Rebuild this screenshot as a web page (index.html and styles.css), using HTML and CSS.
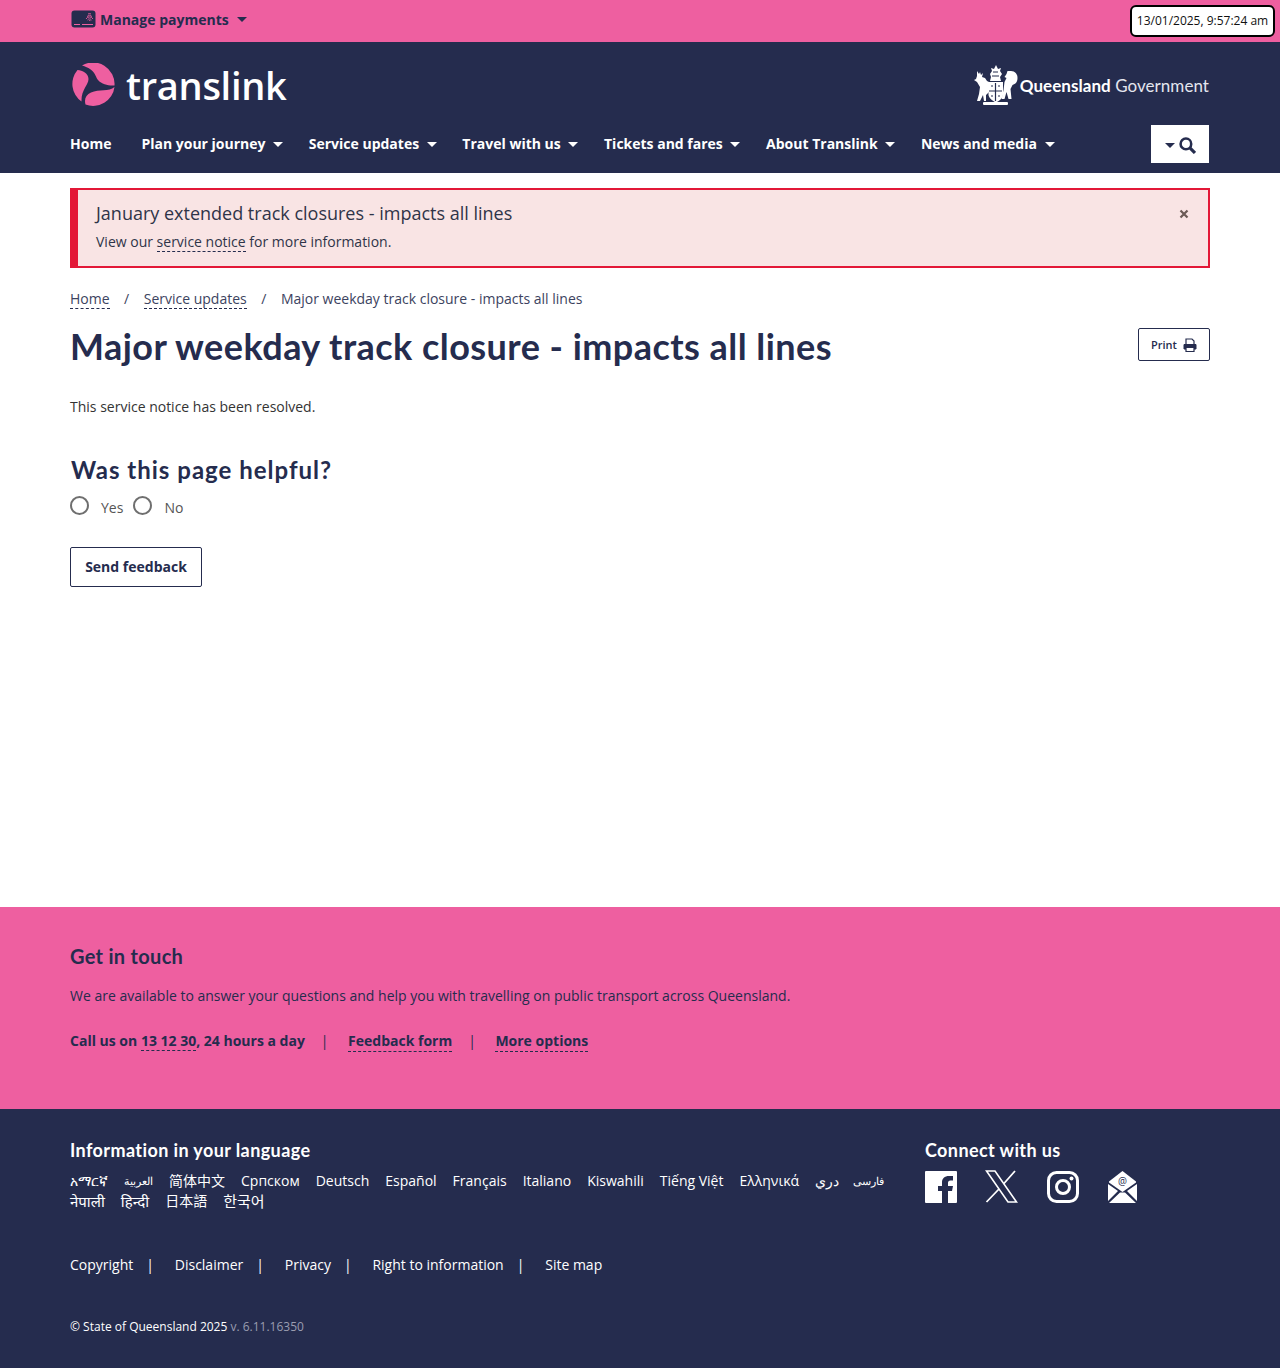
FILE: index.html
```html
<!DOCTYPE html>
<html lang="en">
<head>
    <meta charset="UTF-8">
    <meta name="viewport" content="width=device-width, initial-scale=1.0">
    <title>Major weekday track closure - impacts all lines</title>
    <link rel="stylesheet" href="styles.css">
</head>
<body>
    <div class="clock">13/01/2025, 9:57:24 am</div>

    <div class="topbar">
        <a class="manage" href="#">
            <svg class="card-icon" width="25" height="18" viewBox="0 0 25 18">
                <rect x="0.5" y="0.5" width="24" height="17" rx="3" fill="#252c4e"/>
                <path d="M3 14.500h6M11 14.500h11" stroke="#ee5fa0" stroke-width="1"/>
                <path d="M15 9a4 4 0 0 1 7 0M16.500 10a2.400 2.400 0 0 1 4 0M18 11a.8.8 0 0 1 1.500 0M17 4a3 3 0 0 1 3 0M16 6.500a3.500 3.500 0 0 1 5 0" fill="none" stroke="#ee5fa0" stroke-width="0.9"/>
            </svg>
            Manage payments
            <span class="caret"></span>
        </a>
    </div>

    <header class="header">
        <div class="brand-row">
            <a class="logo" href="#">
                <svg width="44" height="44" viewBox="0 0 44 44">
                    <g fill="#ee5fa0">
                        <path d="M11 2.500A21.500 21.500 0 0 1 43.500 22.500C38 23 31 21.500 27 17C24 13.500 25 6.500 11 2.500Z"/>
                        <path d="M6.500 7C11.500 7 17.500 10.500 17.500 16C17.500 22 10 27 10.500 38.500A21.500 21.500 0 0 1 6.500 7Z"/>
                        <path d="M43.500 24C38 29 28 26 20 29.500C15 31.500 13 36 14.500 41.500A21.500 21.500 0 0 0 43.500 24Z"/>
                    </g>
                </svg>
                <span class="logo-text">translink</span>
            </a>
            <a class="qg" href="#">
                <svg width="44" height="42" viewBox="0 0 44 42">
                    <g fill="#fff">
                        <path d="M14.500 18h14.500v13c-1 4-4 6-7 7.500-3-1.500-6.500-3.500-7.500-7.500Z"/>
                        <path d="M3 7l2 3 1-2 1 3 2-2-1 4 3 1 2 3 2 1v10l-3 3v6H10l-1-6-3 6H3l2-7 1-7-3-5-3-2 2-1 1-3Z"/>
                        <path d="M37 7c4 0 6.500 3 6.500 7 0 4-2 6-5 7l-2 4 1 10h-3l-2-7-2 7h-3l2-9 1-8 2-4-2-1 2-3 1-3Z"/>
                        <path d="M16 10l2-3-1-3 3 1 2-4 2 4 3-1-1 3 2 3-2 3 1 4H16l1-4Z"/>
                        <rect x="9" y="38" width="25" height="3" rx="1"/>
                    </g>
                    <path d="M21.500 19v18M15 27h13M17 22h2M24 22h2M17 32h2M24 32h2M19 8h5M18 12h7" stroke="#252c4e" stroke-width="1.200"/>
                </svg>
                <span class="qg-text"><b>Queensland</b> Government</span>
            </a>
        </div>
        <nav class="nav">
            <a class="nav-home" href="#">Home</a>
            <a href="#">Plan your journey <span class="caret"></span></a>
            <a href="#">Service updates <span class="caret"></span></a>
            <a href="#">Travel with us <span class="caret"></span></a>
            <a href="#">Tickets and fares <span class="caret"></span></a>
            <a href="#">About Translink <span class="caret"></span></a>
            <a href="#">News and media <span class="caret"></span></a>
            <button class="search-btn" aria-label="Search">
                <span class="caret"></span>
                <svg width="17" height="17" viewBox="0 0 16 16">
                    <circle cx="6.500" cy="6.500" r="5" fill="none" stroke="#252c4e" stroke-width="2.400"/>
                    <path d="M10.500 10.500L15 15" stroke="#252c4e" stroke-width="3"/>
                </svg>
            </button>
        </nav>
    </header>

    <main class="main">
        <div class="alert">
            <div>
                <h2 class="alert-title">January extended track closures - impacts all lines</h2>
                <p class="alert-text">View our <a href="#">service notice</a> for more information.</p>
            </div>
            <svg class="alert-close" width="10" height="10" viewBox="0 0 10 10">
                <path d="M1.500 1.500l7 7M8.500 1.500l-7 7" stroke="#6b5a55" stroke-width="2.200"/>
            </svg>
        </div>

        <ol class="breadcrumbs">
            <li><a href="#">Home</a></li>
            <li class="sep">/</li>
            <li><a href="#">Service updates</a></li>
            <li class="sep">/</li>
            <li>Major weekday track closure - impacts all lines</li>
        </ol>

        <div class="title-row">
            <h1>Major weekday track closure - impacts all lines</h1>
            <button class="print-btn">
                Print
                <svg width="14" height="14" viewBox="0 0 14 14">
                    <path d="M3 6V1h6l2 2v3" fill="none" stroke="#252c4e" stroke-width="1.200"/>
                    <path d="M1 6.500h12v4.500h-12Z" fill="#252c4e" stroke="#252c4e"/>
                    <path d="M3 9.500h8v4h-8Z" fill="#fff" stroke="#252c4e" stroke-width="1.200"/>
                </svg>
            </button>
        </div>

        <p class="resolved">This service notice has been resolved.</p>

        <h2 class="helpful">Was this page helpful?</h2>
        <div class="radios">
            <label><input type="radio" name="helpful"> Yes</label>
            <label><input type="radio" name="helpful"> No</label>
        </div>
        <button class="feedback-btn">Send feedback</button>
    </main>

    <section class="touch">
        <h2>Get in touch</h2>
        <p>We are available to answer your questions and help you with travelling on public transport across Queensland.</p>
        <div class="touch-links">
            <span>Call us on <a href="#">13 12 30</a>, 24 hours a day</span>
            <span class="bar">|</span>
            <a href="#">Feedback form</a>
            <span class="bar">|</span>
            <a href="#">More options</a>
        </div>
    </section>

    <footer class="footer">
        <div class="footer-top">
            <div class="languages">
                <h2>Information in your language</h2>
                <ul class="lang-list">
                    <li>አማርኛ</li>
                    <li class="rtl">العربية</li>
                    <li>简体中文</li>
                    <li>Српском</li>
                    <li>Deutsch</li>
                    <li>Español</li>
                    <li>Français</li>
                    <li>Italiano</li>
                    <li>Kiswahili</li>
                    <li>Tiếng Việt</li>
                    <li>Ελληνικά</li>
                    <li class="dari">دري</li>
                    <li class="rtl">فارسی</li>
                    <li class="row-break"></li>
                    <li class="wide">नेपाली</li>
                    <li class="wide">हिन्दी</li>
                    <li>日本語</li>
                    <li class="wide">한국어</li>
                </ul>
            </div>
            <div class="connect">
                <h2>Connect with us</h2>
                <div class="social">
                    <svg class="fb" width="32" height="32" viewBox="0 0 32 32">
                        <path d="M1 0h30a1 1 0 0 1 1 1v30a1 1 0 0 1-1 1h-8V20h4l1-5h-5v-3c0-1.500.7-2.500 2.500-2.500H28V5h-4c-4.500 0-7 2.500-7 6.500V15h-4v5h4v12H1a1 1 0 0 1-1-1V1a1 1 0 0 1 1-1Z" fill="#fff"/>
                    </svg>
                    <svg width="33" height="33" viewBox="0 0 33 33">
                        <path d="M1.500 1h8.500l21.500 31H23Z" fill="none" stroke="#fff" stroke-width="1.600"/>
                        <path d="M30 1L18.500 14M14 19L1.500 32" stroke="#fff" stroke-width="1.800"/>
                    </svg>
                    <svg width="32" height="32" viewBox="0 0 32 32">
                        <rect x="1.500" y="1.500" width="29" height="29" rx="8" fill="none" stroke="#fff" stroke-width="3"/>
                        <circle cx="16" cy="16" r="6.500" fill="none" stroke="#fff" stroke-width="3"/>
                        <circle cx="24.500" cy="7.500" r="2" fill="#fff"/>
                    </svg>
                    <svg width="29" height="32" viewBox="0 0 29 32">
                        <path d="M14.500 0L28 10.500v1L14.500 21 1 11.500v-1Z" fill="#fff"/>
                        <path d="M0 13l10 7L0 30ZM29 13l-10 7 10 10ZM1 32l11-10.500h5L28 32Z" fill="#fff"/>
                        <text x="14.500" y="14" text-anchor="middle" class="at">@</text>
                    </svg>
                </div>
            </div>
        </div>
        <ul class="footer-links">
            <li><a href="#">Copyright</a></li>
            <li><a href="#">Disclaimer</a></li>
            <li><a href="#">Privacy</a></li>
            <li><a href="#">Right to information</a></li>
            <li><a href="#">Site map</a></li>
        </ul>
        <p class="copyright">© State of Queensland 2025 <span>v. 6.11.16350</span></p>
    </footer>
</body>
</html>
```

FILE: styles.css
```css
* {
    box-sizing: border-box;
}
body {
    margin: 0;
    font-family: 'Open Sans', 'Noto Sans', 'Noto Sans CJK SC', sans-serif;
    font-size: 14px;
    color: #252c4e;
    background: #fff;
    position: relative;
}
a {
    color: inherit;
    text-decoration: none;
}
h1, h2, p, ul, ol {
    margin: 0;
    padding: 0;
}
ul, ol {
    list-style: none;
}
.caret {
    display: inline-block;
    width: 0;
    height: 0;
    margin-left: 4px;
    vertical-align: 2px;
    border-top: 5px solid currentColor;
    border-left: 5px solid transparent;
    border-right: 5px solid transparent;
}

/* top strip */
.clock {
    position: absolute;
    top: 5px;
    left: 1130px;
    width: 145px;
    height: 32px;
    border: 2px solid #000;
    border-radius: 6px;
    background: #fff;
    color: #111;
    font-size: 12px;
    line-height: 28px;
    text-align: center;
}
.topbar {
    height: 42px;
    padding: 0 70px;
    display: flex;
    align-items: center;
    background: #ee5fa0;
}
.manage {
    display: flex;
    align-items: center;
    gap: 4px;
    padding-left: 1px;
    padding-bottom: 4px;
    font-weight: 700;
    font-size: 14px;
}
.manage .caret {
    margin-left: 4px;
}

/* header */
.header {
    height: 131px;
    padding: 21px 70px 0;
    background: #252c4e;
    color: #fff;
}
.brand-row {
    display: flex;
    justify-content: space-between;
    align-items: center;
    height: 44px;
}
.logo {
    display: flex;
    align-items: center;
    gap: 11px;
    padding-left: 1px;
}
.logo-text {
    font-size: 38px;
    font-weight: 600;
    letter-spacing: -0.3px;
    line-height: 44px;
}
.qg {
    display: flex;
    align-items: center;
    gap: 2px;
    padding-right: 1px;
}
.qg-text {
    font-family: 'Lato', sans-serif;
    font-size: 17px;
    letter-spacing: 0.05px;
    color: #e4e6ee;
}
.qg-text b {
    color: #fff;
    font-weight: 700;
}
.nav {
    display: flex;
    align-items: center;
    gap: 25.6px;
    margin-top: 18px;
    height: 38px;
    font-weight: 700;
    font-size: 14px;
}
.nav a {
    padding-bottom: 2px;
}
.nav-home {
    margin-right: 4.4px;
}
.search-btn {
    margin-left: auto;
    margin-right: 1px;
    width: 58px;
    height: 38px;
    border: 0;
    background: #fff;
    color: #252c4e;
    display: flex;
    align-items: center;
    justify-content: center;
    gap: 4px;
    padding: 3px 0 0;
}
.search-btn .caret {
    margin: 0;
}

/* main content */
.main {
    min-height: 734px;
    padding: 15px 70px 0;
}
.alert {
    height: 80px;
    display: flex;
    justify-content: space-between;
    align-items: flex-start;
    padding: 10px 19px 0 18px;
    background: #f9e4e4;
    border: 2px solid #e31837;
    border-left-width: 8px;
    color: #2f3448;
}
.alert-title {
    font-size: 18px;
    font-weight: 400;
    line-height: 26px;
}
.alert-text {
    margin-top: 6px;
    line-height: 20px;
}
.alert-text a,
.breadcrumbs a {
    border-bottom: 1px dashed #252c4e;
}
.alert-close {
    margin-top: 9px;
}
.breadcrumbs {
    display: flex;
    gap: 14.5px;
    margin-top: 21px;
    line-height: 20px;
    color: #3c4360;
}
.title-row {
    display: flex;
    justify-content: space-between;
    align-items: flex-start;
    margin-top: 12px;
    height: 48px;
}
h1 {
    font-family: 'Lato', sans-serif;
    font-size: 36px;
    font-weight: 700;
    letter-spacing: 0.45px;
    line-height: 50px;
}
.print-btn {
    margin-top: 7px;
    width: 72px;
    height: 33px;
    display: flex;
    align-items: center;
    justify-content: center;
    gap: 6px;
    border: 1px solid #252c4e;
    border-radius: 2px;
    background: #fff;
    color: #252c4e;
    font-family: inherit;
    font-size: 11px;
    font-weight: 600;
}
.resolved {
    margin-top: 28px;
    line-height: 20px;
    color: #333;
}
.helpful {
    margin-top: 36px;
    padding-left: 1px;
    font-family: 'Lato', sans-serif;
    font-size: 24px;
    font-weight: 700;
    letter-spacing: 1px;
    line-height: 34px;
}
.radios {
    display: flex;
    gap: 10px;
    margin-top: 7px;
    height: 23px;
    color: #555;
}
.radios label {
    display: flex;
    align-items: flex-end;
    gap: 12px;
}
.radios input {
    appearance: none;
    margin: 0 0 2px;
    width: 19px;
    height: 19px;
    border: 2px solid #6f6f6f;
    border-radius: 50%;
    background: #fff;
}
.feedback-btn {
    display: block;
    margin-top: 30px;
    padding: 0 0 2px;
    width: 132px;
    height: 40px;
    border: 1px solid #252c4e;
    border-radius: 2px;
    background: #fff;
    color: #252c4e;
    font-family: inherit;
    font-size: 14px;
    font-weight: 700;
}

/* pink panel */
.touch {
    height: 202px;
    padding: 35px 70px 0;
    background: #ee5fa0;
}
.touch h2 {
    font-family: 'Lato', sans-serif;
    font-size: 20px;
    font-weight: 700;
    letter-spacing: 0.3px;
    line-height: 28px;
}
.touch p {
    margin-top: 16px;
    line-height: 20px;
}
.touch-links {
    display: flex;
    gap: 18px;
    margin-top: 25px;
    font-weight: 700;
    line-height: 20px;
}
.touch-links a {
    border-bottom: 1px dashed #252c4e;
}
.touch-links .bar {
    margin: 0 1.500px 0 -2px;
    font-weight: 400;
}

/* footer */
.footer {
    height: 259px;
    padding: 29px 70px 0;
    background: #252c4e;
    color: #fff;
}
.footer-top {
    display: flex;
    justify-content: space-between;
    height: 115px;
}
.footer h2 {
    font-family: 'Lato', sans-serif;
    font-size: 18px;
    font-weight: 700;
    letter-spacing: 0.4px;
    line-height: 24px;
}
.languages {
    width: 830px;
}
.lang-list {
    display: flex;
    flex-wrap: wrap;
    column-gap: 16px;
    margin-top: 9px;
    line-height: 20px;
}
.lang-list .rtl {
    font-size: 11.300px;
}
.lang-list .dari {
    margin-right: -2px;
    font-size: 13.500px;
}
.lang-list .wide {
    font-size: 15px;
}
.row-break {
    flex-basis: 100%;
}
.connect {
    width: 285px;
}
.social {
    display: flex;
    align-items: center;
    gap: 29px;
    margin-top: 8px;
}
.social .fb {
    margin-right: -1px;
}
.social .at {
    font-size: 10px;
    fill: #252c4e;
}
.footer-links {
    display: flex;
    gap: 20.800px;
    margin-top: 2px;
    line-height: 20px;
}
.footer-links li:not(:last-child)::after {
    content: "|";
    margin-left: 13px;
}
.copyright {
    margin-top: 42px;
    font-size: 12px;
    line-height: 20px;
}
.copyright span {
    color: #9a9db0;
}
```
